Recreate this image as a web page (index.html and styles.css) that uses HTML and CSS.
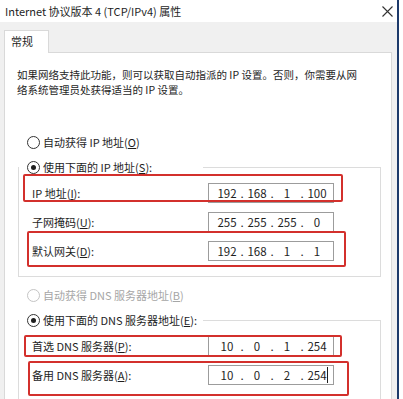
FILE: index.html
```html
<!DOCTYPE html>
<html lang="zh-CN">
<head>
<meta charset="utf-8">
<title>Internet 协议版本 4 (TCP/IPv4) 属性</title>
<link rel="stylesheet" href="styles.css">
</head>
<body>
<div class="window">
  <div class="titlebar">
    <span class="title">Internet 协议版本 4 (TCP/IPv4) 属性</span>
    <svg class="close" width="11" height="11" viewBox="0 0 11 11"><path d="M0.5 0.5 L10.5 10.5 M10.5 0.5 L0.5 10.5" stroke="#333" stroke-width="1.1" fill="none"/></svg>
  </div>
  <div class="dlg">
    <div class="tabs"><div class="tab">常规</div></div>
    <div class="panel">
      <p class="desc">如果网络支持此功能，则可以获取自动指派的 IP 设置。否则，你需要从网<br>络系统管理员处获得适当的 IP 设置。</p>

      <div class="radio-row first"><span class="radio"></span><span>自动获得 IP 地址(<u>O</u>)</span></div>
      <fieldset class="group">
        <legend class="radio-row"><span class="radio checked"></span><span>使用下面的 IP 地址(<u>S</u>):</span></legend>
        <div class="row">
          <span class="label">IP 地址(<u>I</u>):</span>
          <div class="ipfield"><span class="seg">192</span><span class="dot">.</span><span class="seg">168</span><span class="dot">.</span><span class="seg">1</span><span class="dot">.</span><span class="seg">100</span></div>
          <span class="mark m-ip"></span>
        </div>
        <div class="row">
          <span class="label">子网掩码(<u>U</u>):</span>
          <div class="ipfield"><span class="seg">255</span><span class="dot">.</span><span class="seg">255</span><span class="dot">.</span><span class="seg">255</span><span class="dot">.</span><span class="seg">0</span></div>
        </div>
        <div class="row">
          <span class="label">默认网关(<u>D</u>):</span>
          <div class="ipfield"><span class="seg">192</span><span class="dot">.</span><span class="seg">168</span><span class="dot">.</span><span class="seg">1</span><span class="dot">.</span><span class="seg">1</span></div>
          <span class="mark m-gw"></span>
        </div>
      </fieldset>

      <div class="radio-row second disabled"><span class="radio"></span><span>自动获得 DNS 服务器地址(<u>B</u>)</span></div>
      <fieldset class="group">
        <legend class="radio-row"><span class="radio checked"></span><span>使用下面的 DNS 服务器地址(<u>E</u>):</span></legend>
        <div class="row">
          <span class="label">首选 DNS 服务器(<u>P</u>):</span>
          <div class="ipfield"><span class="seg">10</span><span class="dot">.</span><span class="seg">0</span><span class="dot">.</span><span class="seg">1</span><span class="dot">.</span><span class="seg">254</span></div>
          <span class="mark m-dns1"></span>
        </div>
        <div class="row">
          <span class="label">备用 DNS 服务器(<u>A</u>):</span>
          <div class="ipfield"><span class="seg">10</span><span class="dot">.</span><span class="seg">0</span><span class="dot">.</span><span class="seg">2</span><span class="dot">.</span><span class="seg caret">254</span></div>
          <span class="mark m-dns2"></span>
        </div>
      </fieldset>
    </div>
  </div>
</div>
</body>
</html>
```
FILE: styles.css
```css
* { box-sizing: border-box; }
html, body { margin: 0; padding: 0; background: #ffffff; }
body {
  font-family: "Noto Sans CJK SC", "Noto Sans", sans-serif;
  font-size: 11px;
  color: #1e1e1e;
  width: 403px;
  height: 399px;
  overflow: hidden;
}
.window {
  width: 399px;
  height: 399px;
  border-right: 2px solid #1d3a6b;
  background: #f0f0f0;
  overflow: hidden;
}
.titlebar {
  height: 22px;
  background: #ffffff;
  display: flex;
  align-items: center;
  justify-content: space-between;
  padding: 0 4px 0 5px;
}
.title { font-size: 11px; line-height: 16px; }
.close { display: block; margin-right: 0; }
.dlg { padding-top: 8px; }
.tabs { display: flex; padding-left: 4px; }
.tab {
  width: 45px;
  height: 23px;
  margin-bottom: -1px;
  background: #ffffff;
  border: 1px solid #d9d9d9;
  border-bottom: none;
  padding-left: 6px;
  line-height: 21px;
  position: relative;
  z-index: 1;
}
.panel {
  margin-left: 4px;
  width: 388px;
  height: 360px;
  background: #ffffff;
  border: 1px solid #d9d9d9;
  padding: 14px 0 0 12px;
}
.desc {
  margin: 0;
  font-size: 10.5px;
  line-height: 15px;
  white-space: nowrap;
}
.radio-row {
  display: flex;
  align-items: center;
  gap: 3px;
  height: 16px;
  line-height: 16px;
}
.radio-row.first { margin: 37px 0 0 10px; }
.radio-row.second { margin: 10px 0 0 10px; }
.radio {
  width: 13px;
  height: 13px;
  border: 1px solid #333333;
  border-radius: 50%;
  background: #ffffff;
  display: flex;
  align-items: center;
  justify-content: center;
  flex: none;
}
.radio.checked::after {
  content: "";
  width: 5px;
  height: 5px;
  border-radius: 50%;
  background: #1e1e1e;
}
.disabled { color: #a6a6a6; }
.disabled .radio { border-color: #c4c4c4; }
.group {
  margin: 9px 0 0 1px;
  width: 363px;
  border: 1px solid #dcdcdc;
  padding: 8px 0 15px 0;
  display: flex;
  flex-direction: column;
  gap: 9px;
}
.group legend {
  padding: 0 0 0 8px;
  width: 184px;
  background: #ffffff;
}
.row {
  position: relative;
  display: flex;
  align-items: center;
  height: 20px;
  padding-left: 13px;
}
.label { width: 176px; line-height: 20px; white-space: nowrap; }
.ipfield {
  width: 126px;
  height: 20px;
  border: 1px solid #9c9c9c;
  background: #ffffff;
  display: flex;
  align-items: center;
  padding-left: 6px;
  font-size: 11.5px;
  line-height: 18px;
}
.seg { width: 24px; text-align: center; }
.dot { width: 6px; text-align: center; }
.caret { position: relative; }
.caret::after {
  content: "";
  position: absolute;
  right: 1px;
  top: 1px;
  width: 1px;
  height: 16px;
  background: #1e1e1e;
}
.mark {
  position: absolute;
  border: 2px solid #d3302c;
  border-radius: 2px;
  pointer-events: none;
}
.m-ip { left: 4px; top: -9px; width: 320px; height: 28px; }
.m-gw { left: 8px; top: -10px; width: 319px; height: 36px; }
.m-dns1 { left: 5px; top: -1px; width: 318px; height: 22px; }
.m-dns2 { left: 9px; top: -4px; width: 321px; height: 35px; }
```
